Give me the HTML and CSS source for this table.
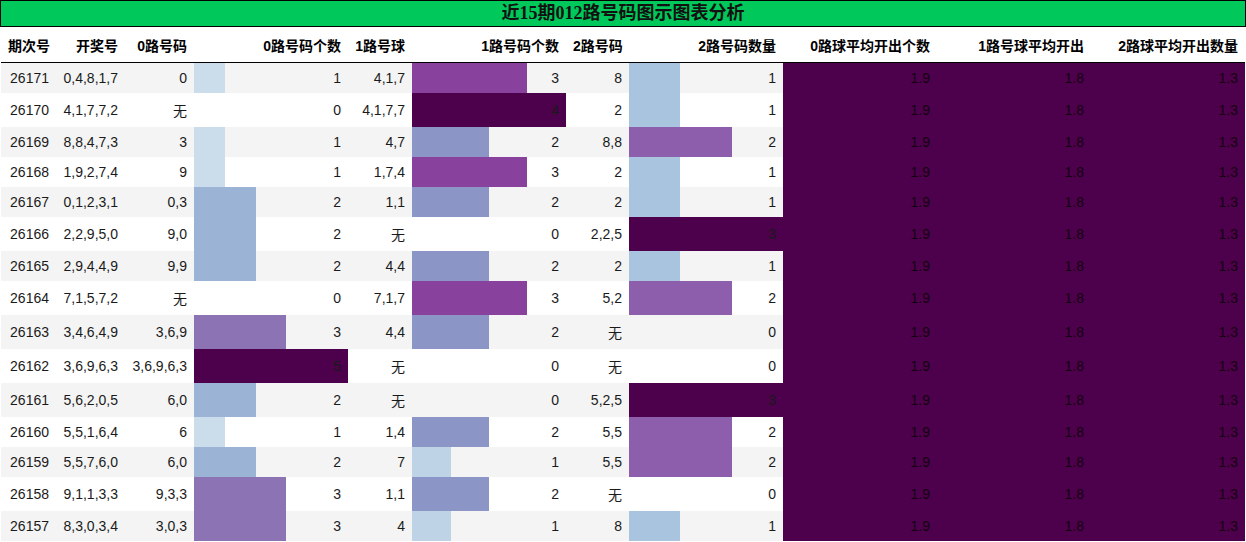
FILE: index.html
```html
<!DOCTYPE html>
<html lang="zh">
<head>
<meta charset="utf-8">
<title>近15期012路号码图示图表分析</title>
<link rel="stylesheet" href="styles.css">
</head>
<body>
<div class="sheet">
  <div class="title">近15期012路号码图示图表分析</div>
  <table class="grid">
    <colgroup>
      <col class="w-issue"><col class="w-draw"><col class="w-code">
      <col class="w-bar"><col class="w-code1"><col class="w-bar">
      <col class="w-code2"><col class="w-bar"><col class="w-bar"><col class="w-bar"><col class="w-bar">
    </colgroup>
    <thead>
      <tr>
        <th>期次号</th><th>开奖号</th><th>0路号码</th><th>0路号码个数</th><th>1路号球</th><th>1路号码个数</th><th>2路号码</th><th>2路号码数量</th><th>0路球平均开出个数</th><th>1路号球平均开出</th><th>2路球平均开出数量</th>
      </tr>
    </thead>
    <tbody>
      <tr><td>26171</td><td>0,4,8,1,7</td><td>0</td><td class="bar z1" style="--w:20%">1</td><td>4,1,7</td><td class="bar o3" style="--w:75%">3</td><td>8</td><td class="bar t1" style="--w:33.333%">1</td><td class="avg">1.9</td><td class="avg">1.8</td><td class="avg">1.3</td></tr>
      <tr><td>26170</td><td>4,1,7,7,2</td><td>无</td><td>0</td><td>4,1,7,7</td><td class="bar o4" style="--w:100%">4</td><td>2</td><td class="bar t1" style="--w:33.333%">1</td><td class="avg">1.9</td><td class="avg">1.8</td><td class="avg">1.3</td></tr>
      <tr><td>26169</td><td>8,8,4,7,3</td><td>3</td><td class="bar z1" style="--w:20%">1</td><td>4,7</td><td class="bar o2" style="--w:50%">2</td><td>8,8</td><td class="bar t2" style="--w:66.667%">2</td><td class="avg">1.9</td><td class="avg">1.8</td><td class="avg">1.3</td></tr>
      <tr><td>26168</td><td>1,9,2,7,4</td><td>9</td><td class="bar z1" style="--w:20%">1</td><td>1,7,4</td><td class="bar o3" style="--w:75%">3</td><td>2</td><td class="bar t1" style="--w:33.333%">1</td><td class="avg">1.9</td><td class="avg">1.8</td><td class="avg">1.3</td></tr>
      <tr><td>26167</td><td>0,1,2,3,1</td><td>0,3</td><td class="bar z2" style="--w:40%">2</td><td>1,1</td><td class="bar o2" style="--w:50%">2</td><td>2</td><td class="bar t1" style="--w:33.333%">1</td><td class="avg">1.9</td><td class="avg">1.8</td><td class="avg">1.3</td></tr>
      <tr><td>26166</td><td>2,2,9,5,0</td><td>9,0</td><td class="bar z2" style="--w:40%">2</td><td>无</td><td>0</td><td>2,2,5</td><td class="bar t3" style="--w:100%">3</td><td class="avg">1.9</td><td class="avg">1.8</td><td class="avg">1.3</td></tr>
      <tr><td>26165</td><td>2,9,4,4,9</td><td>9,9</td><td class="bar z2" style="--w:40%">2</td><td>4,4</td><td class="bar o2" style="--w:50%">2</td><td>2</td><td class="bar t1" style="--w:33.333%">1</td><td class="avg">1.9</td><td class="avg">1.8</td><td class="avg">1.3</td></tr>
      <tr><td>26164</td><td>7,1,5,7,2</td><td>无</td><td>0</td><td>7,1,7</td><td class="bar o3" style="--w:75%">3</td><td>5,2</td><td class="bar t2" style="--w:66.667%">2</td><td class="avg">1.9</td><td class="avg">1.8</td><td class="avg">1.3</td></tr>
      <tr><td>26163</td><td>3,4,6,4,9</td><td>3,6,9</td><td class="bar z3" style="--w:60%">3</td><td>4,4</td><td class="bar o2" style="--w:50%">2</td><td>无</td><td>0</td><td class="avg">1.9</td><td class="avg">1.8</td><td class="avg">1.3</td></tr>
      <tr><td>26162</td><td>3,6,9,6,3</td><td>3,6,9,6,3</td><td class="bar z5" style="--w:100%">5</td><td>无</td><td>0</td><td>无</td><td>0</td><td class="avg">1.9</td><td class="avg">1.8</td><td class="avg">1.3</td></tr>
      <tr><td>26161</td><td>5,6,2,0,5</td><td>6,0</td><td class="bar z2" style="--w:40%">2</td><td>无</td><td>0</td><td>5,2,5</td><td class="bar t3" style="--w:100%">3</td><td class="avg">1.9</td><td class="avg">1.8</td><td class="avg">1.3</td></tr>
      <tr><td>26160</td><td>5,5,1,6,4</td><td>6</td><td class="bar z1" style="--w:20%">1</td><td>1,4</td><td class="bar o2" style="--w:50%">2</td><td>5,5</td><td class="bar t2" style="--w:66.667%">2</td><td class="avg">1.9</td><td class="avg">1.8</td><td class="avg">1.3</td></tr>
      <tr><td>26159</td><td>5,5,7,6,0</td><td>6,0</td><td class="bar z2" style="--w:40%">2</td><td>7</td><td class="bar o1" style="--w:25%">1</td><td>5,5</td><td class="bar t2" style="--w:66.667%">2</td><td class="avg">1.9</td><td class="avg">1.8</td><td class="avg">1.3</td></tr>
      <tr><td>26158</td><td>9,1,1,3,3</td><td>9,3,3</td><td class="bar z3" style="--w:60%">3</td><td>1,1</td><td class="bar o2" style="--w:50%">2</td><td>无</td><td>0</td><td class="avg">1.9</td><td class="avg">1.8</td><td class="avg">1.3</td></tr>
      <tr><td>26157</td><td>8,3,0,3,4</td><td>3,0,3</td><td class="bar z3" style="--w:60%">3</td><td>4</td><td class="bar o1" style="--w:25%">1</td><td>8</td><td class="bar t1" style="--w:33.333%">1</td><td class="avg">1.9</td><td class="avg">1.8</td><td class="avg">1.3</td></tr>
    </tbody>
  </table>
</div>
</body>
</html>
```
FILE: styles.css
```css
html, body {
  margin: 0;
  padding: 0;
  background: #fff;
}

.sheet {
  width: 1246px;
}

.title {
  box-sizing: border-box;
  height: 27px;
  border: 1px solid #000;
  background: #00c85a;
  color: #111;
  font-family: "Liberation Serif", "Noto Sans CJK SC", serif;
  font-weight: bold;
  font-size: 18px;
  line-height: 25px;
  text-align: center;
}

.grid {
  margin-left: 1px;
  width: 1244px;
  table-layout: fixed;
  border-collapse: collapse;
  border-spacing: 0;
  font-family: "Liberation Sans", "Noto Sans CJK SC", sans-serif;
  font-size: 14px;
  color: #1a1a1a;
}

.w-issue { width: 55px; }
.w-draw { width: 69px; }
.w-code { width: 69px; }
.w-code1 { width: 64px; }
.w-code2 { width: 63px; }
.w-bar { width: 154px; }

.grid th,
.grid td {
  padding: 7px 7px;
  text-align: right;
  white-space: nowrap;
  overflow: hidden;
}

.grid th {
  padding-top: 8px;
  font-weight: bold;
  color: #000;
  background: #fff;
  border-bottom: 1px solid #000;
}

.grid tbody tr:nth-child(odd) {
  background: #f4f4f4;
}

.grid tbody tr:nth-child(even) {
  background: #fff;
}

.bar {
  background-image: linear-gradient(to right, var(--c) var(--w), transparent var(--w));
  background-repeat: no-repeat;
}

.z1 { --c: #cbdcea; }
.z2 { --c: #9bb4d6; }
.z3 { --c: #8c74b4; }
.z5 { --c: #4d004b; }

.o1 { --c: #bfd3e6; }
.o2 { --c: #8c96c6; }
.o3 { --c: #88419d; }
.o4 { --c: #4d004b; }

.t1 { --c: #a9c4df; }
.t2 { --c: #8c5eac; }
.t3 { --c: #4d004b; }

.grid td.avg {
  background: #4d004b;
  color: #14000f;
}
```
